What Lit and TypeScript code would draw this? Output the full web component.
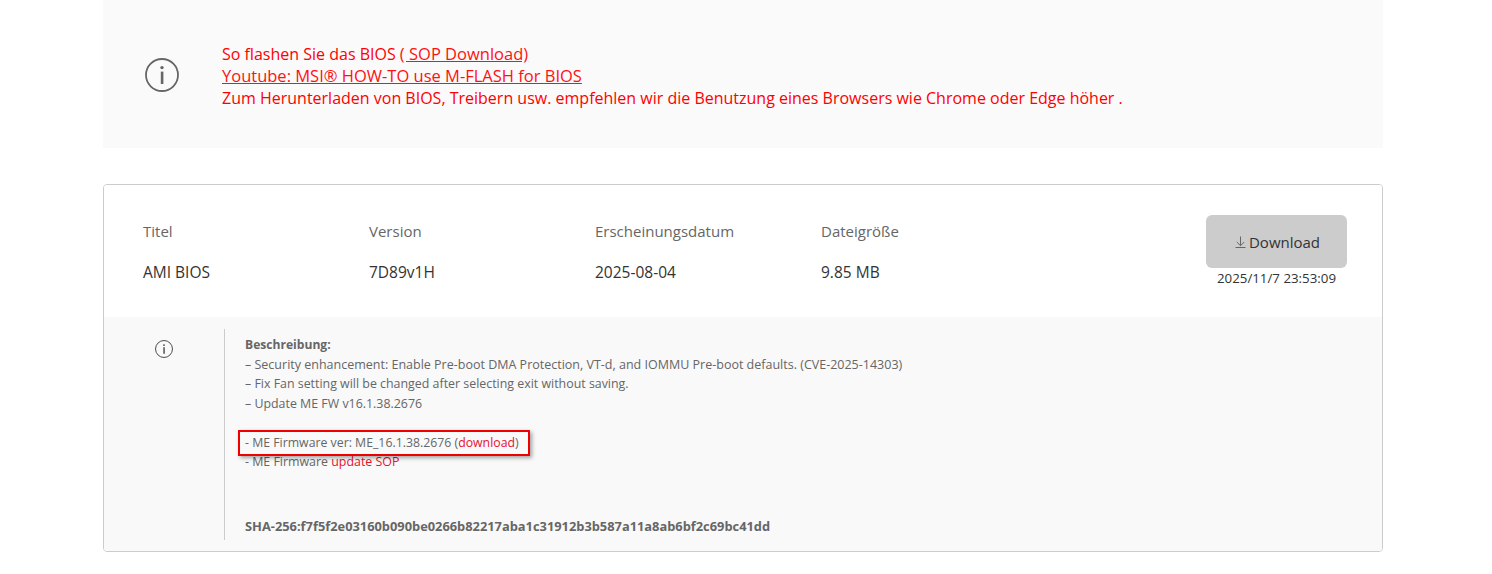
import { html, LitElement, css } from "lit";
import { customElement } from "lit/decorators.js";

const infoIcon = (size: number, color = "#666") => html`
  <svg width=${size} height=${size} viewBox="0 0 34 34" fill="none">
    <circle cx="17" cy="17" r="16" stroke=${color} stroke-width="1.8"></circle>
    <circle cx="17" cy="9.6" r="1.7" fill=${color}></circle>
    <rect x="15.8" y="13.6" width="2.6" height="12.4" fill=${color}></rect>
  </svg>
`;

@customElement("app-root")
export class App extends LitElement {
  static styles = css`
    :host {
      display: block;
      font-family: "Open Sans", "Noto Sans", sans-serif;
      color: #333;
    }

    .page {
      width: 1280px;
      margin-left: 103px;
    }

    .notice {
      height: 148px;
      background: #fafafa;
      display: flex;
      align-items: center;
      padding-left: 42px;
      box-sizing: border-box;
    }

    .notice svg {
      flex: none;
      margin: 1px 43px 0 0;
    }

    .notice-text {
      color: #f00;
      font-size: 16px;
      line-height: 22px;
      margin-top: 4px;
    }

    .notice-text a {
      color: #f11;
      font-size: 16.5px;
      text-decoration: underline;
    }

    .card {
      margin-top: 36px;
      height: 368px;
      box-sizing: border-box;
      border: 1px solid #ccc;
      border-radius: 4px;
      overflow: hidden;
      display: flex;
      flex-direction: column;
    }

    .summary {
      height: 132px;
      flex: none;
      display: flex;
      background: #fff;
      padding: 30px 35px 0 39px;
      box-sizing: border-box;
    }

    .cols {
      flex: 1;
      display: grid;
      grid-template-columns: repeat(4, 226px);
      grid-template-rows: 41px 22px;
      align-content: start;
      line-height: 22px;
      padding-top: 5px;
    }

    .head {
      color: #666;
      font-size: 15px;
    }

    .value {
      color: #333;
      font-size: 15.5px;
    }

    .action {
      width: 141px;
      display: flex;
      flex-direction: column;
      align-items: center;
    }

    .btn {
      width: 141px;
      height: 53px;
      background: #ccc;
      border-radius: 6px;
      display: flex;
      align-items: center;
      justify-content: center;
      gap: 3px;
      padding-left: 2px;
      box-sizing: border-box;
      font-size: 15px;
      color: #333;
    }

    .stamp {
      font-size: 13.3px;
      line-height: 20px;
      white-space: nowrap;
    }

    .details {
      flex: 1;
      background: #f9f9f9;
      display: flex;
      padding: 12px 0 11px;
    }

    .details-icon {
      width: 120px;
      flex: none;
      padding: 11px 0 0 51px;
      box-sizing: border-box;
    }

    .desc {
      border-left: 1px solid #ccc;
      padding: 6px 0 0 20px;
      font-size: 12.4px;
      line-height: 19.5px;
      color: #666;
      flex: 1;
    }

    .desc b {
      font-weight: 700;
      font-size: 12.1px;
    }

    .desc .sha {
      font-size: 12.85px;
    }

    .desc .wide {
      font-size: 12.5px;
    }

    .desc a {
      color: #e8112d;
      text-decoration: none;
    }

    .gap {
      height: 19.5px;
    }

    .gap-lg {
      height: 45px;
    }

    .marked {
      position: relative;
      font-size: 12.3px;
    }

    .marked::after {
      content: "";
      position: absolute;
      left: -7px;
      top: -3px;
      width: 288px;
      height: 22px;
      border: 2px solid #e00;
      box-shadow: 2px 2px 4px rgba(0, 0, 0, 0.35);
    }
  `;

  render() {
    return html`
      <div class="page">
        <div class="notice">
          ${infoIcon(34)}
          <div class="notice-text">
            <div>So flashen Sie das BIOS <a>( SOP Download)</a></div>
            <div><a>Youtube: MSI® HOW-TO use M-FLASH for BIOS</a></div>
            <div>Zum Herunterladen von BIOS, Treibern usw. empfehlen wir die Benutzung eines Browsers wie Chrome oder Edge höher .</div>
          </div>
        </div>

        <div class="card">
          <div class="summary">
            <div class="cols">
              <div class="head">Titel</div>
              <div class="head">Version</div>
              <div class="head">Erscheinungsdatum</div>
              <div class="head">Dateigröße</div>
              <div class="value">AMI BIOS</div>
              <div class="value">7D89v1H</div>
              <div class="value">2025-08-04</div>
              <div class="value">9.85 MB</div>
            </div>
            <div class="action">
              <div class="btn">
                <svg width="11" height="12" viewBox="0 0 11 12" fill="none" stroke="#666" stroke-width="1">
                  <path d="M5.5 0.5V9.5M1.8 6L5.5 9.7L9.2 6M0.5 11.5H10.5"></path>
                </svg>
                <span>Download</span>
              </div>
              <div class="stamp">2025/11/7 23:53:09</div>
            </div>
          </div>

          <div class="details">
            <div class="details-icon">${infoIcon(18, "#444")}</div>
            <div class="desc">
              <div><b>Beschreibung:</b></div>
              <div class="wide">– Security enhancement: Enable Pre-boot DMA Protection, VT-d, and IOMMU Pre-boot defaults. (CVE-2025-14303)</div>
              <div>– Fix Fan setting will be changed after selecting exit without saving.</div>
              <div>– Update ME FW v16.1.38.2676</div>
              <div class="gap"></div>
              <div class="marked">- ME Firmware ver: ME_16.1.38.2676 (<a>download</a>)</div>
              <div>- ME Firmware <a>update SOP</a></div>
              <div class="gap-lg"></div>
              <div><b class="sha">SHA-256:f7f5f2e03160b090be0266b82217aba1c31912b3b587a11a8ab6bf2c69bc41dd</b></div>
            </div>
          </div>
        </div>
      </div>
    `;
  }
}
